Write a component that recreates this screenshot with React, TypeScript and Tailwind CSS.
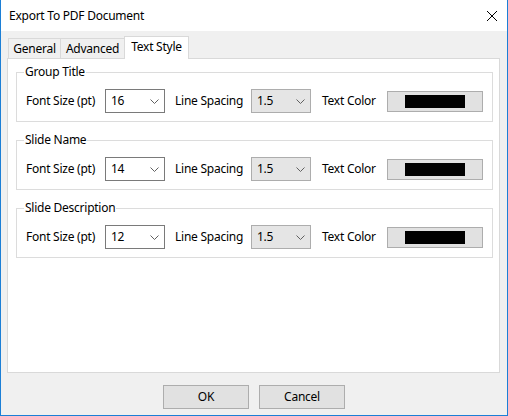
import React from 'react';

type Row = {
  title: string;
  size: string;
};

const ROWS: Row[] = [
  { title: 'Group Title', size: '16' },
  { title: 'Slide Name', size: '14' },
  { title: 'Slide Description', size: '12' },
];

const FONT = { fontFamily: '"Segoe UI", "Noto Sans", sans-serif' };

function Chevron() {
  return (
    <svg width="9" height="5" viewBox="0 0 9 5" className="shrink-0">
      <polyline points="0.5,0.5 4.5,4.5 8.5,0.5" fill="none" stroke="#606060" strokeWidth="1" />
    </svg>
  );
}

function Combo({ value, disabled }: { value: string; disabled?: boolean }) {
  return (
    <div
      className={`flex items-center justify-between w-[60px] h-[24px] pl-[5px] pr-[5px] border ${
        disabled ? 'bg-[#e5e5e5] border-[#adadad]' : 'bg-white border-[#7a7a7a]'
      }`}
    >
      <span>{value}</span>
      <Chevron />
    </div>
  );
}

function StyleGroup({ row }: { row: Row }) {
  return (
    <fieldset className="border border-[#dcdcdc] px-[9px] pt-[9px] pb-[8px]">
      <legend className="ml-[-2px] px-[1px] leading-[16px]">{row.title}</legend>
      <div className="flex items-center">
        <span className="w-[79px]">Font Size (pt)</span>
        <Combo value={row.size} />
        <span className="w-[76px] ml-[10px]">Line Spacing</span>
        <Combo value="1.5" disabled />
        <span className="w-[65px] ml-[11px]">Text Color</span>
        <div className="flex items-center justify-center w-[96px] h-[21px] bg-[#e1e1e1] border border-[#adadad]">
          <div className="w-[60px] h-[13px] bg-black" />
        </div>
      </div>
    </fieldset>
  );
}

export default function App() {
  return (
    <div
      className="w-[508px] h-[416px] flex flex-col bg-[#f0f0f0] border-l border-r border-b border-[#1c7fd6] text-[12px] leading-[16px] tracking-[-0.25px] text-black"
      style={FONT}
    >
      {/* title bar */}
      <div className="h-[31px] shrink-0 bg-white flex items-center justify-between pl-[8px] pr-[10px]">
        <span>Export To PDF Document</span>
        <svg width="10" height="10" viewBox="0 0 10 10">
          <line x1="0" y1="0" x2="10" y2="10" stroke="#000" strokeWidth="1" />
          <line x1="10" y1="0" x2="0" y2="10" stroke="#000" strokeWidth="1" />
        </svg>
      </div>

      <div className="flex-1 flex flex-col pt-[5px] pl-[6px] pr-[7px]">
        {/* tabs */}
        <div className="flex items-end h-[22px] pl-[1px]">
          <div className="w-[53px] h-[20px] flex items-center justify-center bg-[#f0f0f0] border border-b-0 border-[#d9d9d9]">
            General
          </div>
          <div className="w-[64px] h-[20px] flex items-center justify-center bg-[#f0f0f0] border border-b-0 border-l-0 border-[#d9d9d9]">
            Advanced
          </div>
          <div className="relative z-10 -mb-px ml-[-1px] w-[65px] h-[23px] flex items-center justify-center bg-white border border-b-0 border-[#d9d9d9] pb-[2px]">
            Text Style
          </div>
        </div>

        {/* tab panel */}
        <div className="flex-1 flex flex-col gap-[10px] bg-white border border-[#d9d9d9] pt-[5px] pl-[8px] pr-[6px]">
          {ROWS.map((row) => (
            <StyleGroup key={row.title} row={row} />
          ))}
        </div>

        {/* buttons */}
        <div className="flex justify-center gap-[10px] pt-[12px] pb-[6px] pl-[1px]">
          <button className="w-[86px] h-[24px] bg-[#e1e1e1] border border-[#adadad]">OK</button>
          <button className="w-[86px] h-[24px] bg-[#e1e1e1] border border-[#adadad]">Cancel</button>
        </div>
      </div>
    </div>
  );
}
